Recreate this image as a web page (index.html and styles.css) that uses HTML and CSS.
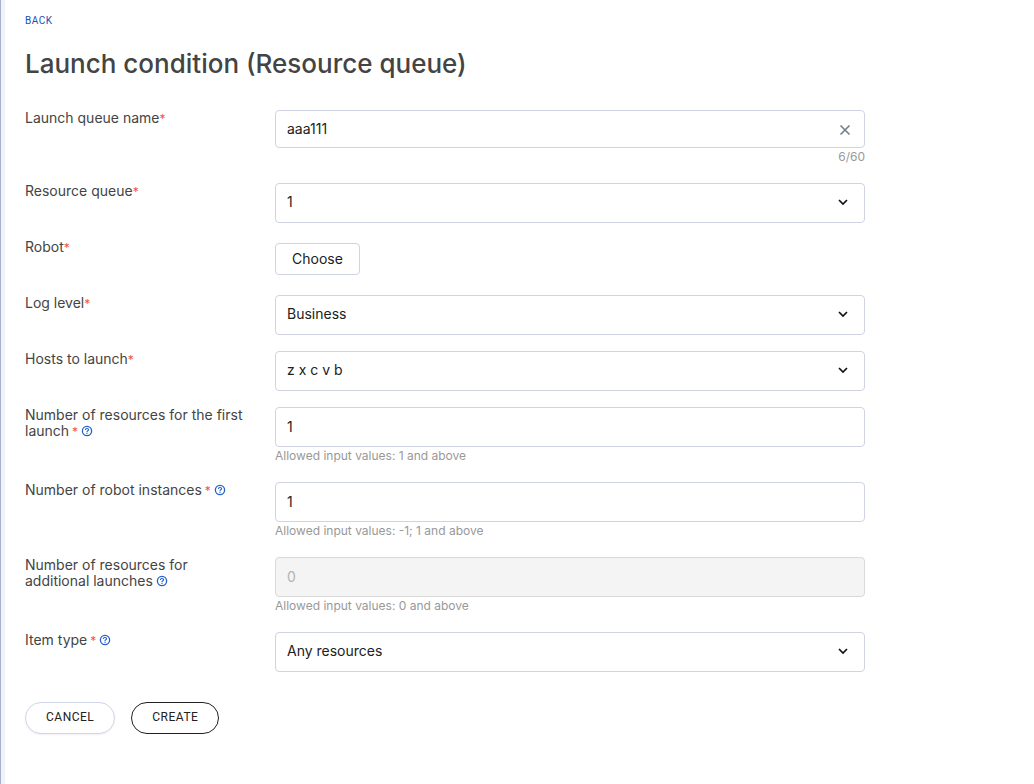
FILE: index.html
```html
<!DOCTYPE html>
<html lang="en">
  <head>
    <meta charset="UTF-8" />
    <meta name="viewport" content="width=device-width, initial-scale=1.0" />
    <link rel="stylesheet" href="styles.css">
    <title>Launch condition (Resource queue)</title>
  </head>
  <body>
    <svg class="sprite" aria-hidden="true">
      <symbol id="help" viewBox="0 0 12 12">
        <circle cx="6" cy="6" r="4.6" fill="none" stroke="currentColor" stroke-width="1.3" />
        <path d="M4.4 4.9C4.4 4 5.1 3.5 6 3.5S7.6 4 7.6 4.8C7.6 5.8 6 5.8 6 6.9" fill="none" stroke="currentColor" stroke-width="1.1" />
        <circle cx="6" cy="8.3" r="0.7" fill="currentColor" />
      </symbol>
      <symbol id="chevron" viewBox="0 0 12 12">
        <path d="M2 4L6 8L10 4" fill="none" stroke="currentColor" stroke-width="1.7" />
      </symbol>
    </svg>

    <main class="page">
      <a class="back" href="#">BACK</a>
      <h1>Launch condition (Resource queue)</h1>

      <form class="form">
        <div class="row">
          <label class="label" for="name">Launch queue name<span class="req">*</span></label>
          <div class="field">
            <div class="control">
              <input class="input short" id="name" type="text" value="aaa111" maxlength="60">
              <button class="clear" id="clear-btn" type="button" aria-label="Clear">
                <svg viewBox="0 0 12 12" width="12" height="12">
                  <path d="M1.5 1.5L10.5 10.5M10.5 1.5L1.5 10.5" fill="none" stroke="currentColor" stroke-width="1.6" />
                </svg>
              </button>
            </div>
            <p class="hint count" id="count">6/60</p>
          </div>
        </div>

        <div class="row">
          <label class="label" for="queue">Resource queue<span class="req">*</span></label>
          <div class="control">
            <select class="input" id="queue"><option>1</option></select>
            <svg class="chevron"><use href="#chevron" /></svg>
          </div>
        </div>

        <div class="row">
          <label class="label" for="robot">Robot<span class="req">*</span></label>
          <div class="field choose-field">
            <button class="choose" id="robot" type="button">Choose</button>
          </div>
        </div>

        <div class="row">
          <label class="label" for="log">Log level<span class="req">*</span></label>
          <div class="control">
            <select class="input" id="log"><option>Business</option></select>
            <svg class="chevron"><use href="#chevron" /></svg>
          </div>
        </div>

        <div class="row">
          <label class="label" for="hosts">Hosts to launch<span class="req">*</span></label>
          <div class="control">
            <select class="input" id="hosts"><option>z x c v b</option></select>
            <svg class="chevron"><use href="#chevron" /></svg>
          </div>
        </div>

        <div class="row">
          <label class="label" for="first">Number of resources for the first launch<span class="req spaced">*</span><svg class="help"><use href="#help" /></svg></label>
          <div class="field">
            <input class="input" id="first" type="text" value="1">
            <p class="hint">Allowed input values: 1 and above</p>
          </div>
        </div>

        <div class="row">
          <label class="label" for="instances">Number of robot instances<span class="req spaced">*</span><svg class="help"><use href="#help" /></svg></label>
          <div class="field">
            <input class="input" id="instances" type="text" value="1">
            <p class="hint">Allowed input values: -1; 1 and above</p>
          </div>
        </div>

        <div class="row">
          <label class="label" for="additional">Number of resources for additional launches<svg class="help"><use href="#help" /></svg></label>
          <div class="field">
            <input class="input" id="additional" type="text" value="0" disabled>
            <p class="hint">Allowed input values: 0 and above</p>
          </div>
        </div>

        <div class="row">
          <label class="label" for="type">Item type<span class="req spaced">*</span><svg class="help"><use href="#help" /></svg></label>
          <div class="control">
            <select class="input" id="type"><option>Any resources</option></select>
            <svg class="chevron"><use href="#chevron" /></svg>
          </div>
        </div>

        <div class="actions">
          <button class="btn" type="button">CANCEL</button>
          <button class="btn primary" type="button">CREATE</button>
        </div>
      </form>
    </main>

    <script>
      let nameInput = document.querySelector("#name");
      let clearBtn = document.querySelector("#clear-btn");
      let count = document.querySelector("#count");

      const updateCount = () => {
        count.innerText = `${nameInput.value.length}/60`;
      };

      nameInput.addEventListener("input", updateCount);
      clearBtn.addEventListener("click", () => {
        nameInput.value = "";
        updateCount();
      });
    </script>
  </body>
</html>
```
FILE: styles.css
```css
* {
  box-sizing: border-box;
  margin: 0;
  padding: 0;
}

body {
  min-height: 100vh;
  border-left: 1px solid #a9b1c9;
  background-color: #fff;
  color: #444;
  font-family: Inter, Roboto, sans-serif;
  font-size: 14px;
  line-height: 16px;
}

button,
input,
select {
  font: inherit;
  color: #212121;
}

.sprite {
  position: absolute;
  width: 0;
  height: 0;
}

.page {
  min-height: 100vh;
  padding: 13px 20px 20px;
  border-left: 4px solid #eff2f8;
}

.back {
  display: block;
  width: max-content;
  color: #1a4fb5;
  font-family: Roboto, sans-serif;
  font-size: 10px;
  letter-spacing: 0.5px;
  text-decoration: none;
}

h1 {
  margin: 19px 0 30px;
  font-size: 26px;
  font-weight: 500;
  line-height: 32px;
}

.form {
  display: flex;
  flex-direction: column;
  gap: 16px;
  max-width: 840px;
}

.row {
  display: grid;
  grid-template-columns: 220px 1fr;
  column-gap: 30px;
  align-items: start;
}

.req {
  color: #f5504e;
  font-size: 12px;
  line-height: 12px;
}

.spaced {
  margin-left: 3px;
}

.help {
  width: 12px;
  height: 12px;
  margin-left: 3px;
  color: #2460c8;
  vertical-align: -1px;
}

.control {
  display: grid;
  align-items: center;
}

.control > * {
  grid-area: 1 / 1;
}

.input {
  display: block;
  width: 100%;
  height: 40px;
  padding: 0 11px 2px;
  border: 1px solid #d0d4e2;
  border-radius: 4px;
  background-color: #fff;
  appearance: none;
}

.short {
  height: 38px;
}

.input:disabled {
  border-color: #d9d9d9;
  background-color: #f4f4f4;
  color: #b3b3b3;
  opacity: 1;
}

.chevron {
  justify-self: end;
  width: 12px;
  height: 12px;
  margin: 0 16px 2px 0;
  color: #111;
  pointer-events: none;
}

.clear {
  display: flex;
  justify-self: end;
  margin: 2px 14px 0 0;
  border: none;
  background: none;
  color: #747c8c;
  cursor: pointer;
}

.hint {
  padding-bottom: 1px;
  color: #999;
  font-size: 12px;
  line-height: 18px;
}

.count {
  text-align: right;
}

.choose-field {
  padding: 4px 0;
}

.choose {
  display: block;
  height: 32px;
  padding: 0 16px 1px;
  border: 1px solid #d0d4e2;
  border-radius: 4px;
  background-color: #fff;
}

.actions {
  display: flex;
  gap: 16px;
  margin-top: 14px;
}

.btn {
  height: 32px;
  padding: 0 20px 2px;
  border: 1px solid #d0d6e6;
  border-radius: 16px;
  background-color: #fff;
  box-shadow: 0 1px 2px rgba(0, 0, 0, 0.06);
  font-family: Roboto, sans-serif;
  font-size: 12px;
  letter-spacing: 0.5px;
}

.primary {
  border-color: #212121;
  box-shadow: none;
}
```
